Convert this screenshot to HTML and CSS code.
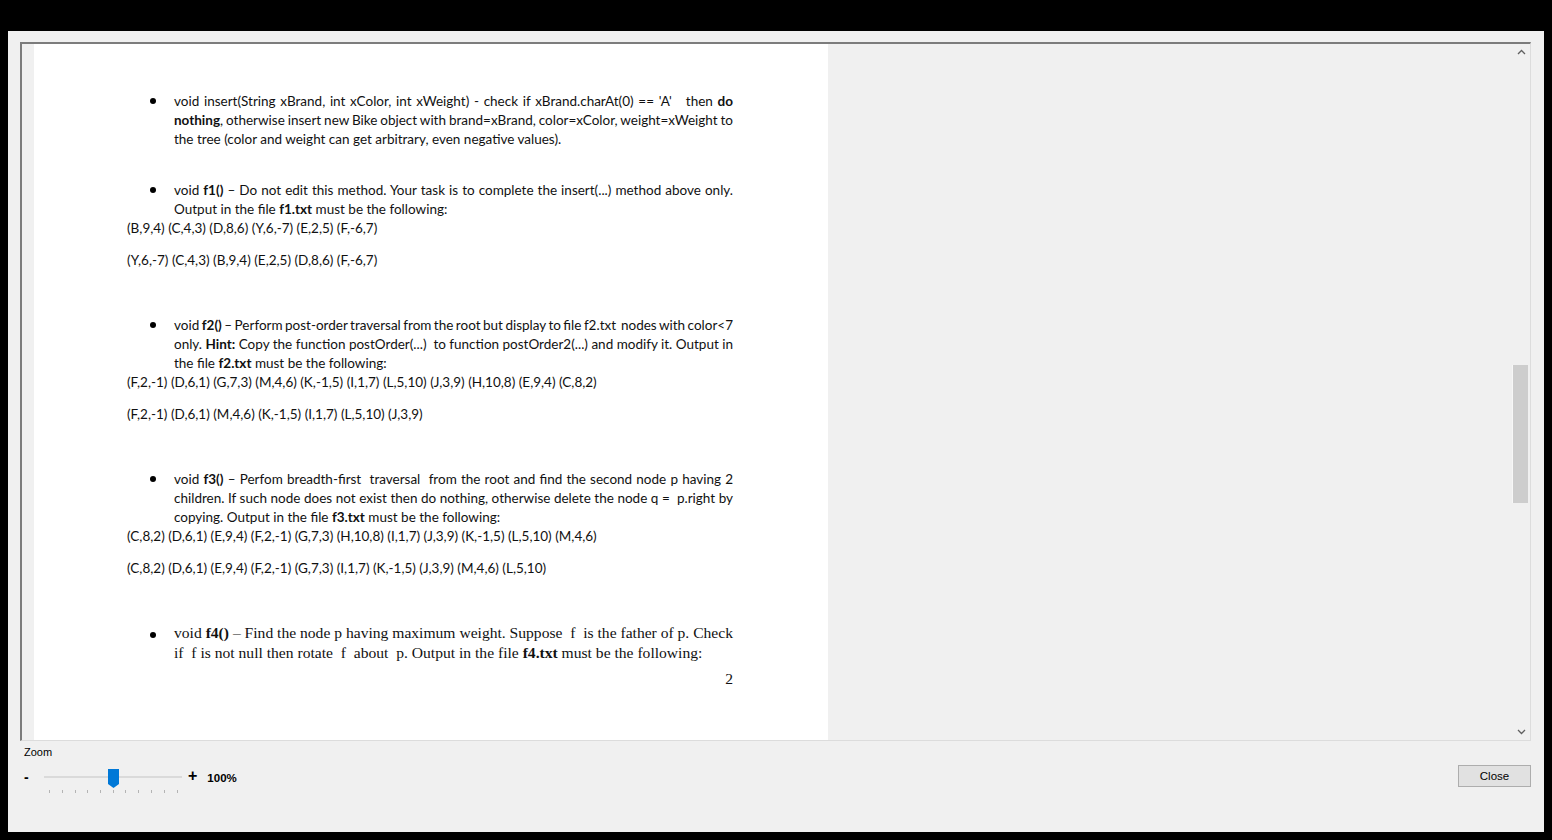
FILE: index.html
```html
<!DOCTYPE html>
<html>
<head>
<meta charset="utf-8">
<title>Document viewer</title>
<link rel="stylesheet" href="styles.css">
</head>
<body>
<div class="window">
  <div class="viewer">
    <div class="canvas">
      <div class="page">
        <div class="item first">
          <span class="dot"></span>
          <div class="para">
            <span class="jl">void insert(String xBrand, int xColor, int xWeight) - check if xBrand.charAt(0) == 'A' &nbsp; then <b>do</b></span>
            <span class="jl"><b>nothing</b>, otherwise insert new Bike object with brand=xBrand, color=xColor, weight=xWeight to</span>
            <span class="ln">the tree (color and weight can get arbitrary, even negative values).</span>
          </div>
        </div>

        <div class="item sec">
          <span class="dot"></span>
          <div class="para">
            <span class="jl">void <b>f1()</b> – Do not edit this method. Your task is to complete the insert(...) method above only.</span>
            <span class="ln">Output in the file <b>f1.txt</b> must be the following:</span>
          </div>
        </div>
        <div class="code">(B,9,4) (C,4,3) (D,8,6) (Y,6,-7) (E,2,5) (F,-6,7)</div>
        <div class="code gap">(Y,6,-7) (C,4,3) (B,9,4) (E,2,5) (D,8,6) (F,-6,7)</div>

        <div class="item sec2">
          <span class="dot"></span>
          <div class="para">
            <span class="jl">void <b>f2()</b> – Perform post-order traversal from the root but display to file f2.txt &nbsp;nodes with color&lt;7</span>
            <span class="jl">only. <b>Hint:</b> Copy the function postOrder(...) &nbsp;to function postOrder2(...) and modify it. Output in</span>
            <span class="ln">the file <b>f2.txt</b> must be the following:</span>
          </div>
        </div>
        <div class="code">(F,2,-1) (D,6,1) (G,7,3) (M,4,6) (K,-1,5) (I,1,7) (L,5,10) (J,3,9) (H,10,8) (E,9,4) (C,8,2)</div>
        <div class="code gap">(F,2,-1) (D,6,1) (M,4,6) (K,-1,5) (I,1,7) (L,5,10) (J,3,9)</div>

        <div class="item sec2">
          <span class="dot"></span>
          <div class="para">
            <span class="jl">void <b>f3()</b> – Perfom breadth-first &nbsp;traversal &nbsp;from the root and find the second node p having 2</span>
            <span class="jl">children. If such node does not exist then do nothing, otherwise delete the node q = &nbsp;p.right by</span>
            <span class="ln">copying. Output in the file <b>f3.txt</b> must be the following:</span>
          </div>
        </div>
        <div class="code">(C,8,2) (D,6,1) (E,9,4) (F,2,-1) (G,7,3) (H,10,8) (I,1,7) (J,3,9) (K,-1,5) (L,5,10) (M,4,6)</div>
        <div class="code gap">(C,8,2) (D,6,1) (E,9,4) (F,2,-1) (G,7,3) (I,1,7) (K,-1,5) (J,3,9) (M,4,6) (L,5,10)</div>

        <div class="item serif">
          <span class="dot"></span>
          <div class="para">
            <span class="jl">void <b>f4()</b> – Find the node p having maximum weight. Suppose &nbsp;f &nbsp;is the father of p. Check</span>
            <span class="ln">if &nbsp;f is not null then rotate &nbsp;f &nbsp;about &nbsp;p. Output in the file <b>f4.txt</b> must be the following:</span>
          </div>
        </div>
        <div class="pagenum">2</div>
      </div>
      <div class="fill"></div>
    </div>
    <div class="vscroll">
      <div class="arrow">
        <svg width="17" height="17" viewBox="0 0 17 17"><polyline points="5,10 8.5,6.5 12,10" fill="none" stroke="#606060" stroke-width="1.3"/></svg>
      </div>
      <div class="track"><div class="thumb"></div></div>
      <div class="arrow">
        <svg width="17" height="17" viewBox="0 0 17 17"><polyline points="5,7 8.5,10.5 12,7" fill="none" stroke="#606060" stroke-width="1.3"/></svg>
      </div>
    </div>
  </div>
  <div class="controls">
    <div class="zoomgroup">
      <div class="zoomlabel">Zoom</div>
      <div class="sliderrow">
        <span class="minus">-</span>
        <svg class="slider" width="146" height="28" viewBox="0 0 146 28">
          <rect x="4" y="10" width="138" height="2" fill="#dadada"/>
          <g stroke="#b4b4b4" stroke-width="1">
            <line x1="9.5" y1="24" x2="9.5" y2="27"/>
            <line x1="22.5" y1="24" x2="22.5" y2="27"/>
            <line x1="35.5" y1="24" x2="35.5" y2="27"/>
            <line x1="47.5" y1="24" x2="47.5" y2="27"/>
            <line x1="60.5" y1="24" x2="60.5" y2="27"/>
            <line x1="73.5" y1="24" x2="73.5" y2="27"/>
            <line x1="85.5" y1="24" x2="85.5" y2="27"/>
            <line x1="98.5" y1="24" x2="98.5" y2="27"/>
            <line x1="111.5" y1="24" x2="111.5" y2="27"/>
            <line x1="124.5" y1="24" x2="124.5" y2="27"/>
            <line x1="137.5" y1="24" x2="137.5" y2="27"/>
          </g>
          <polygon points="68,3 79,3 79,18 73.5,22 68,18" fill="#0078d7"/>
        </svg>
        <span class="plus">+</span>
        <span class="pct">100%</span>
      </div>
    </div>
    <button class="close">Close</button>
  </div>
</div>
</body>
</html>
```

FILE: styles.css
```css
html, body {
  margin: 0;
  padding: 0;
  background: #000;
  width: 1552px;
  height: 840px;
  overflow: hidden;
}

.window {
  margin: 31px 8px 0 8px;
  height: 801px;
  background: #f0f0f0;
  padding: 11px 13px 0 12px;
  box-sizing: border-box;
  display: flex;
  flex-direction: column;
}

.viewer {
  height: 699px;
  flex: none;
  box-sizing: border-box;
  border-top: 2px solid #7c7c7c;
  border-left: 2px solid #7c7c7c;
  border-right: 1px solid #dcdcdc;
  border-bottom: 1px solid #dcdcdc;
  display: flex;
  background: #f0f0f0;
}

.canvas {
  flex: 1;
  display: flex;
  padding-left: 12px;
  overflow: hidden;
}

.page {
  width: 794px;
  flex: none;
  background: #fff;
  box-sizing: border-box;
  padding: 48px 95px 0 93px;
  font-family: Lato, "Liberation Sans", sans-serif;
  font-size: 13.5px;
  line-height: 19px;
  color: #111;
}

.fill { flex: 1; }

.item {
  display: flex;
  align-items: flex-start;
}
.item.sec { margin-top: 32px; }
.item.sec2 { margin-top: 46px; }

.dot {
  flex: none;
  width: 6px;
  height: 6px;
  border-radius: 50%;
  background: #000;
  margin: 6px 18px 0 23px;
}

.para { flex: 1; min-width: 0; }

.jl {
  display: block;
  text-align: justify;
  text-align-last: justify;
  word-spacing: -1.5px;
}
.ln { display: block; }

.code.gap { margin-top: 13px; }

.item.serif {
  margin-top: 45px;
  font-family: "Liberation Serif", serif;
  font-size: 15.6px;
  line-height: 20px;
}
.item.serif .dot { margin-top: 9px; }

.pagenum {
  margin-top: 6px;
  text-align: right;
  font-family: "Liberation Serif", serif;
  font-size: 15.6px;
  line-height: 20px;
}

.vscroll {
  width: 17px;
  flex: none;
  display: flex;
  flex-direction: column;
}
.arrow { height: 17px; }
.arrow svg { display: block; }
.track { flex: 1; padding-top: 304px; }
.thumb {
  width: 16px;
  height: 138px;
  background: #cdcdcd;
  border-left: 1px solid #f7f7f7;
  box-sizing: border-box;
  margin-left: -1px;
}

.controls {
  flex: 1;
  display: flex;
  justify-content: space-between;
  align-items: flex-start;
  font-family: "Liberation Sans", Arial, sans-serif;
  color: #000;
}

.zoomgroup { padding: 4px 0 0 4px; }
.zoomlabel { font-size: 11px; line-height: 14px; }

.sliderrow {
  margin-top: 7px;
  display: flex;
  align-items: flex-start;
  height: 28px;
}
.minus {
  width: 16px;
  padding-left: 0;
  box-sizing: border-box;
  font-size: 14px;
  font-weight: bold;
  line-height: 22px;
}
.slider { display: block; }
.plus {
  margin-left: 2px;
  font-size: 16px;
  font-weight: bold;
  line-height: 20px;
}
.pct {
  margin-left: 10px;
  font-size: 11.5px;
  font-weight: bold;
  line-height: 24px;
}

.close {
  margin-top: 24px;
  width: 73px;
  height: 22px;
  background: #e1e1e1;
  border: 1px solid #adadad;
  font-family: "Liberation Sans", Arial, sans-serif;
  font-size: 11.5px;
  color: #000;
  padding: 0;
}
```
